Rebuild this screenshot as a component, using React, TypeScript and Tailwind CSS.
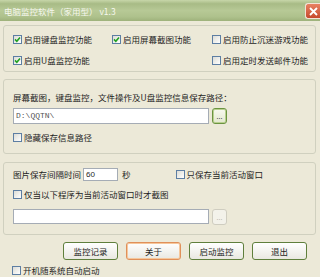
import React from "react";

const font = { fontFamily: '"Noto Sans CJK SC", "Liberation Sans", sans-serif' };

function Box({ checked }: { checked?: boolean }) {
  return (
    <span className="w-[9px] h-[9px] shrink-0 border border-[#5d7ea3] bg-gradient-to-br from-[#dcdcd5] to-[#ffffff] flex items-center justify-center">
      {checked && (
        <svg width="7" height="7" viewBox="0 0 7 7">
          <path d="M1 3.4 L2.8 5.2 L6 1.4" stroke="#21a121" strokeWidth="1.6" fill="none" />
        </svg>
      )}
    </span>
  );
}

function Cb({ label, checked }: { label: string; checked?: boolean }) {
  return (
    <div className="flex items-center gap-[2px] h-[13px] whitespace-nowrap">
      <Box checked={checked} />
      <span>{label}</span>
    </div>
  );
}

function Btn({ label, def }: { label: string; def?: boolean }) {
  return (
    <div
      className={
        "w-[55px] h-[18px] rounded-[3px] border flex items-center justify-center bg-gradient-to-b from-[#ffffff] to-[#e9e8e1] " +
        (def ? "border-[#e0905a] shadow-[inset_0_0_0_1px_#f6c79b]" : "border-[#5f7f3c]")
      }
    >
      {label}
    </div>
  );
}

function Dots({ disabled }: { disabled?: boolean }) {
  return (
    <div
      className={
        "w-[15px] h-[16px] rounded-[3px] border flex items-center justify-center text-[7px] leading-none " +
        (disabled
          ? "border-[#cfcdc0] bg-[#f3f2ea] text-[#b8b6a8]"
          : "border-[#6b9440] bg-gradient-to-b from-[#f8f9ef] to-[#e3e8cf] text-[#333] shadow-[inset_0_0_0_1px_#b9d08f]")
      }
    >
      ...
    </div>
  );
}

export default function App() {
  return (
    <div className="w-[320px] h-[277px] bg-[#ECE9D8] text-[8.5px] leading-none text-[#1e1e1e] overflow-hidden" style={font}>
      <div className="h-[21px] flex items-start justify-between bg-[linear-gradient(to_bottom,#c7d6a9_0%,#a8bb86_18%,#b7c996_50%,#aec18c_80%,#9eb27b_100%)]">
        <span className="pl-[4px] pt-[7px] text-[#f6f8ee]">电脑监控软件（家用型） v1.3</span>
        <div className="mt-[3px] w-[15px] h-[16px] rounded-l-[3px] border border-r-0 border-[#f3e2d7] bg-gradient-to-b from-[#e88262] to-[#c6482c] flex items-center justify-center">
          <svg width="9" height="9" viewBox="0 0 9 9">
            <path d="M1 1 L8 8 M8 1 L1 8" stroke="#ffffff" strokeWidth="1.8" />
          </svg>
        </div>
      </div>
      <div className="pt-[4px] pl-[3px] pr-[4px]">
        <div className="border border-[#d0d0bf] rounded-[3px] pt-[7px] pb-[4px] pl-[9px]">
          <div className="grid grid-cols-[99px_100px_1fr] gap-y-[8px]">
            <Cb label="启用键盘监控功能" checked />
            <Cb label="启用屏幕截图功能" checked />
            <Cb label="启用防止沉迷游戏功能" />
            <Cb label="启用U盘监控功能" checked />
            <div />
            <Cb label="启用定时发送邮件功能" />
          </div>
        </div>
        <div className="mt-[7px] border border-[#d0d0bf] rounded-[3px] pt-[11px] pb-[10px] pl-[9px]">
          <div className="h-[12px] flex items-center whitespace-nowrap">屏幕截图，键盘监控，文件操作及U盘监控信息保存路径：</div>
          <div className="mt-[5px] flex gap-[3px]">
            <div className="w-[196px] h-[16px] border border-[#a5acb5] bg-white flex items-center pl-[2px] text-[8px] text-[#555]" style={{ fontFamily: '"Liberation Mono", monospace' }}>
              D:\QQTN\
            </div>
            <Dots />
          </div>
          <div className="mt-[7px] h-[12px] flex items-center">
            <Cb label="隐藏保存信息路径" />
          </div>
        </div>
        <div className="mt-[8px] border border-[#d0d0bf] rounded-[3px] pt-[5px] pb-[9px] pl-[9px]">
          <div className="h-[13px] flex items-center">
            <span>图片保存间隔时间</span>
            <div className="ml-[2px] w-[35px] h-[13px] border border-[#a5acb5] bg-white flex items-center pl-[2px] text-[8px]" style={{ fontFamily: '"Liberation Sans", sans-serif' }}>
              60
            </div>
            <span className="ml-[4px]">秒</span>
            <div className="ml-[45px]">
              <Cb label="只保存当前活动窗口" />
            </div>
          </div>
          <div className="mt-[7px] h-[12px] flex items-center">
            <Cb label="仅当以下程序为当前活动窗口时才截图" />
          </div>
          <div className="mt-[9px] flex gap-[3px]">
            <div className="w-[196px] h-[15px] border border-[#a5acb5] bg-white" />
            <Dots disabled />
          </div>
        </div>
        <div className="mt-[7px] flex gap-[8px] pl-[60px]">
          <Btn label="监控记录" />
          <Btn label="关于" def />
          <Btn label="启动监控" />
          <Btn label="退出" />
        </div>
        <div className="mt-[4px] pl-[9px] h-[12px] flex items-center">
          <Cb label="开机随系统自动启动" />
        </div>
      </div>
    </div>
  );
}
